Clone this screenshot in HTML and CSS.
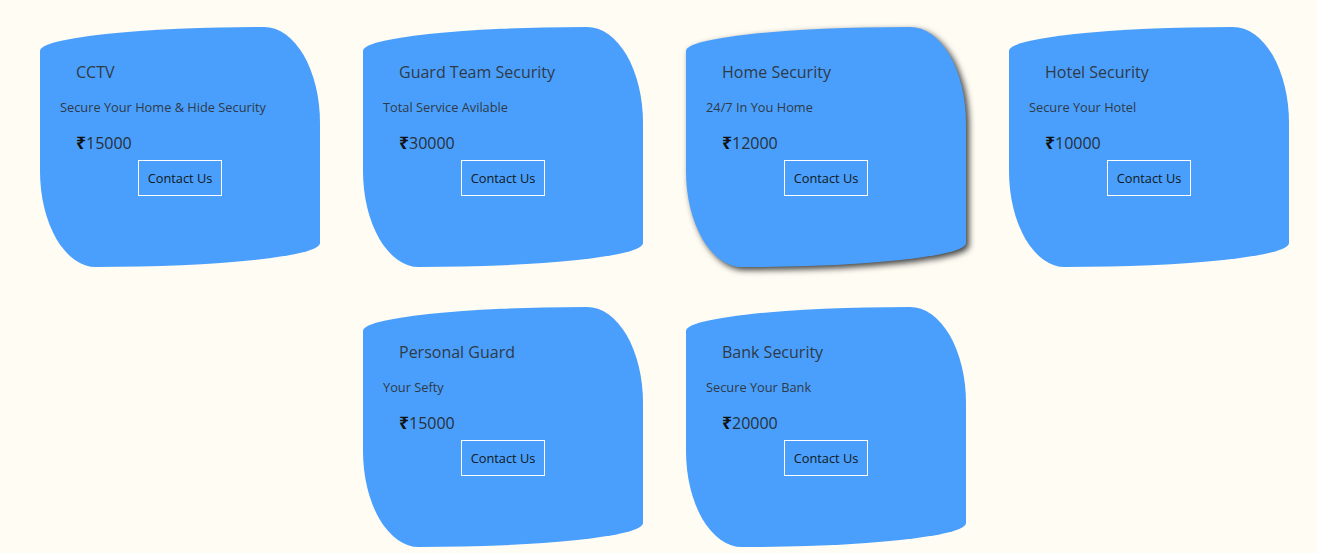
FILE: index.html
```html
<!DOCTYPE html>
<html lang="en">
<head>
<meta charset="utf-8">
<title>Services</title>
<link rel="stylesheet" href="styles.css">
</head>
<body>
<div class="services">
  <div class="card">
    <h3 class="card-title">CCTV</h3>
    <p class="card-text">Secure Your Home &amp; Hide Security</p>
    <p class="card-price"><span class="rupee">₹</span>15000</p>
    <div class="card-action"><button class="btn">Contact Us</button></div>
  </div>
  <div class="card">
    <h3 class="card-title">Guard Team Security</h3>
    <p class="card-text">Total Service Avilable</p>
    <p class="card-price"><span class="rupee">₹</span>30000</p>
    <div class="card-action"><button class="btn">Contact Us</button></div>
  </div>
  <div class="card card-hover">
    <h3 class="card-title">Home Security</h3>
    <p class="card-text">24/7 In You Home</p>
    <p class="card-price"><span class="rupee">₹</span>12000</p>
    <div class="card-action"><button class="btn">Contact Us</button></div>
  </div>
  <div class="card">
    <h3 class="card-title">Hotel Security</h3>
    <p class="card-text">Secure Your Hotel</p>
    <p class="card-price"><span class="rupee">₹</span>10000</p>
    <div class="card-action"><button class="btn">Contact Us</button></div>
  </div>
  <div class="card">
    <h3 class="card-title">Personal Guard</h3>
    <p class="card-text">Your Sefty</p>
    <p class="card-price"><span class="rupee">₹</span>15000</p>
    <div class="card-action"><button class="btn">Contact Us</button></div>
  </div>
  <div class="card">
    <h3 class="card-title">Bank Security</h3>
    <p class="card-text">Secure Your Bank</p>
    <p class="card-price"><span class="rupee">₹</span>20000</p>
    <div class="card-action"><button class="btn">Contact Us</button></div>
  </div>
</div>
</body>
</html>
```
FILE: styles.css
```css
html, body {
  margin: 0;
  padding: 0;
  background: #fffcf4;
  font-family: "Open Sans", "Noto Sans", sans-serif;
  overflow: hidden;
}

.services {
  display: flex;
  flex-wrap: wrap;
  justify-content: center;
  column-gap: 43px;
  row-gap: 40px;
  padding: 27px 0 0 12px;
}

.card {
  box-sizing: border-box;
  width: 280px;
  height: 240px;
  padding: 33px 20px 0;
  background: #4a9ffc;
  border-radius: 80% 20% 80% 20% / 10% 40% 10% 40%;
  color: #2f3a48;
}

.card-hover {
  box-shadow: 3px 3px 6px rgba(0, 0, 0, 0.75);
}

.card-title {
  margin: 0 0 0 16px;
  font-size: 16px;
  font-weight: 400;
  line-height: 24px;
}

.card-text {
  margin: 14px 0 0;
  font-size: 12.8px;
  line-height: 18px;
}

.card-price {
  margin: 16px 0 0 16px;
  font-size: 16px;
  line-height: 22px;
  color: #26303b;
}

.rupee {
  font-size: 17.5px;
  line-height: 20px;
  font-weight: 700;
  color: #111;
}

.card-action {
  display: flex;
  justify-content: center;
  margin-top: 6px;
}

.btn {
  font-family: "Open Sans", "Noto Sans", sans-serif;
  font-size: 12.8px;
  line-height: 18px;
  padding: 8px 8.5px;
  background: transparent;
  border: 1px solid #ffffff;
  color: #111820;
}
```
